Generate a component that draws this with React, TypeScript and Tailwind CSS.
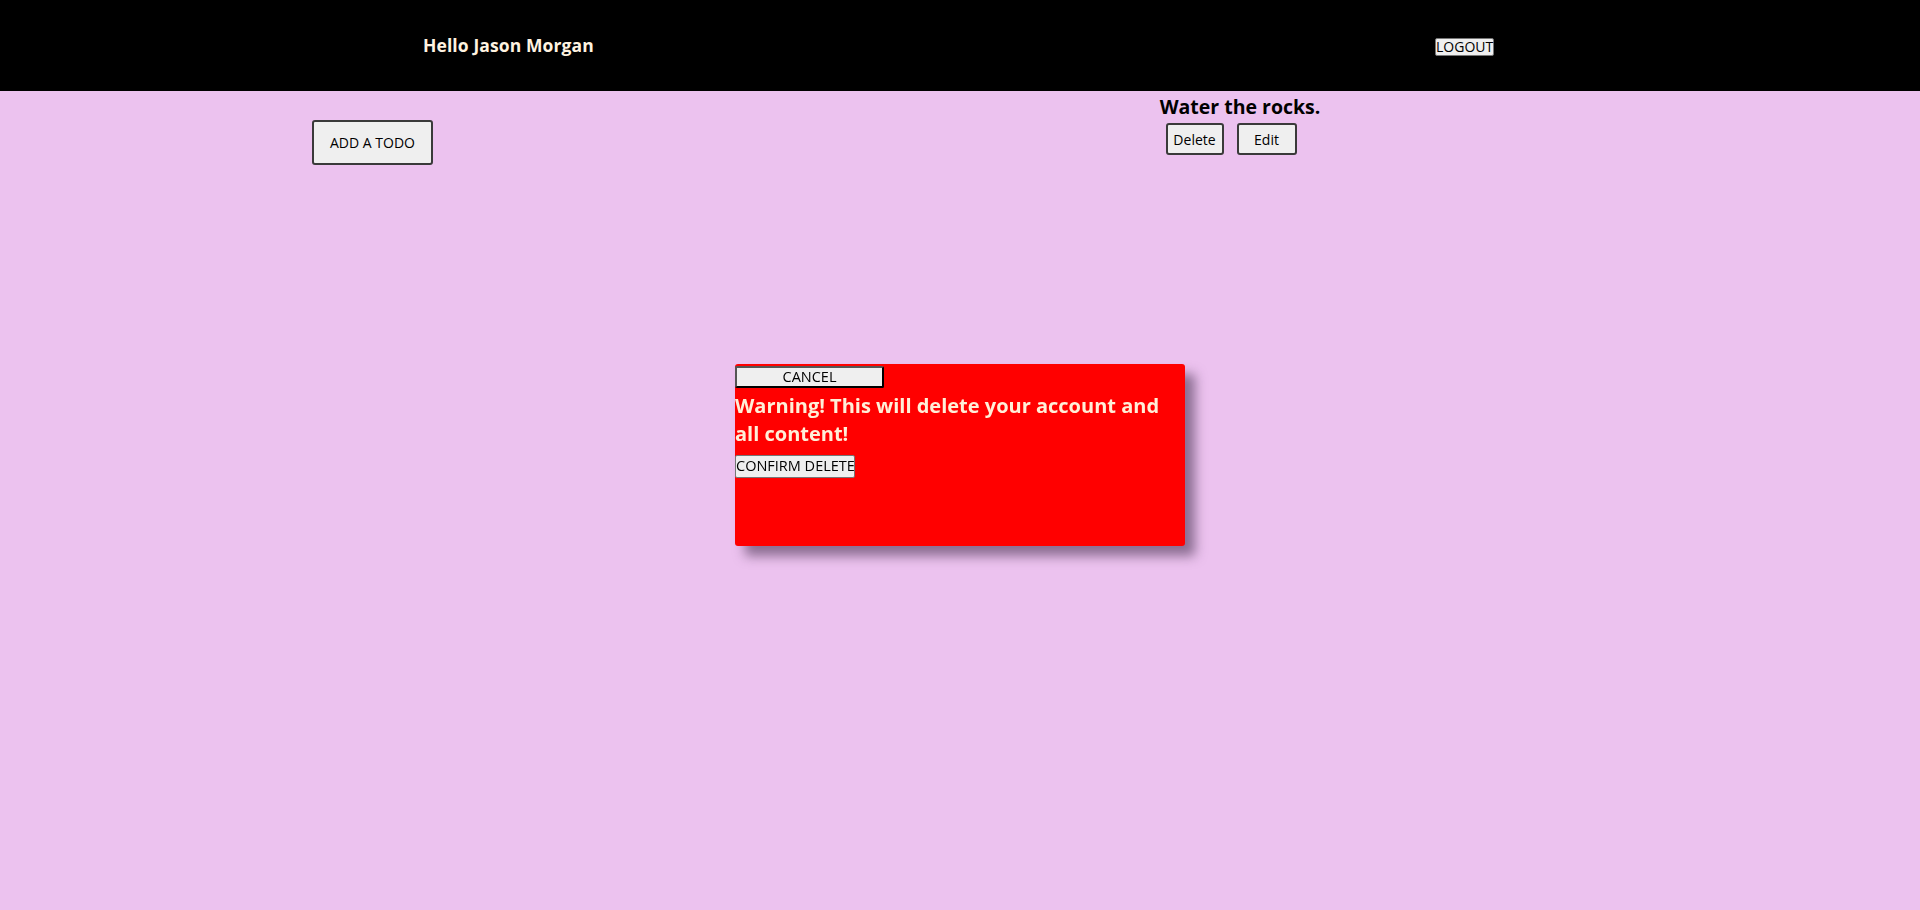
import React from "react";

export default function App() {
  return (
    <div className="min-h-[910px] bg-[#ecc2ef] font-['Open_Sans',sans-serif]">
      <header className="flex h-[91px] items-center bg-black">
        <span className="ml-[423px] text-[17.5px] font-bold tracking-[0.1px] text-[#fff3e0]">Hello Jason Morgan</span>
        <button className="ml-auto mr-[426px] mt-[3px] h-[18px] w-[59px] rounded-[2px] border border-[#767676] bg-[#efefef] text-[14px] leading-none text-black">
          LOGOUT
        </button>
      </header>
      <main className="flex">
        <div className="ml-[312px] pt-[29px]">
          <button className="h-[45px] w-[121px] rounded-[3px] border-2 border-[#3a3a3a] bg-[#efefef] text-[14px] text-black">
            ADD A TODO
          </button>
        </div>
        <div className="ml-[727px] flex w-[160px] flex-col items-center pt-[1px]">
          <h3 className="whitespace-nowrap text-[19.5px] font-bold leading-[30px] text-black">Water the rocks.</h3>
          <div className="mt-[1px] flex gap-[13px] pr-[18px]">
            <button className="h-[32px] w-[58px] rounded-[3px] border-2 border-[#3a3a3a] bg-[#efefef] text-[14px] text-black">Delete</button>
            <button className="h-[32px] w-[60px] rounded-[3px] border-2 border-[#3a3a3a] bg-[#efefef] text-[14px] text-black">Edit</button>
          </div>
        </div>
      </main>
      <div className="fixed inset-0 flex items-center justify-center">
        <div className="flex h-[182px] w-[450px] flex-col items-start rounded-[3px] bg-[#ff0000] shadow-[10px_10px_12px_rgba(60,40,70,0.55)]">
          <button className="mt-[2px] h-[22px] w-[149px] rounded-[2px] border-2 border-black border-l-[#555] border-t-[#555] bg-[#efefef] text-[14.5px] leading-none text-black">
            CANCEL
          </button>
          <h3 className="mt-[4px] text-[20px] font-bold leading-[28px] text-[#ffefd8]">
            Warning! This will delete your account and all content!
          </h3>
          <button className="mt-[7px] h-[23px] w-[120px] overflow-hidden rounded-[2px] border border-[#767676] bg-[#efefef] px-0 text-[14.5px] leading-none text-black whitespace-nowrap">
            CONFIRM DELETE
          </button>
        </div>
      </div>
    </div>
  );
}
